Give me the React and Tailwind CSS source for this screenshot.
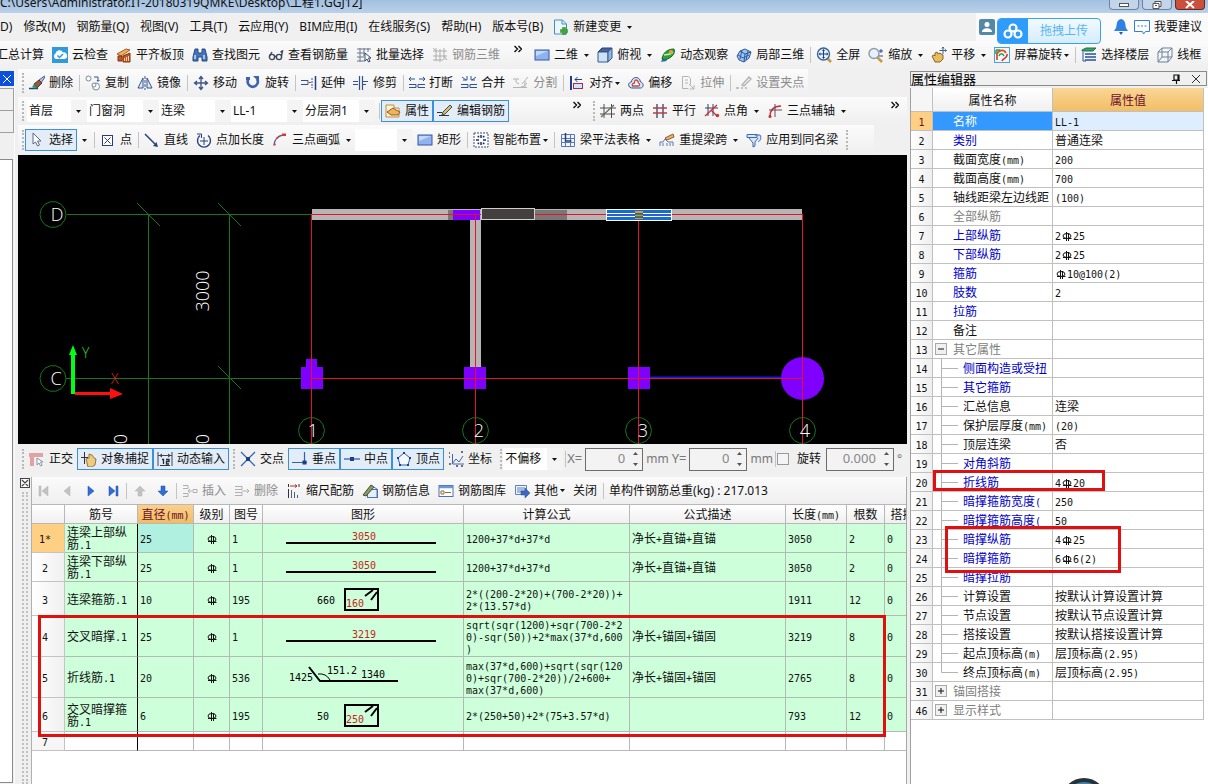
import React from 'react';
import clsx from 'clsx';

const UI = "font-['Noto_Sans','Noto_Sans_CJK_SC',sans-serif]";

// 16x16 toolbar drawings
const icons = {
  cloudCheck: (
    <>
      <rect width="16" height="16" fill="#2d9bdc" />
      <path d="M4 12a3 3 0 0 1-.5-5.500A4 4 0 0 1 11 5.500a3.300 3.300 0 0 1 1.500 6.500z" fill="#fff" />
      <path d="M5.500 8.500l2 2 3.500-3.500" fill="none" stroke="#2d9bdc" strokeWidth="1.500" />
    </>
  ),
  slab: (
    <>
      <path d="M1 7l9-5 4 1-9 6z" fill="#f0b45a" stroke="#a65a20" />
      <path d="M2 14V9h4v5zM7 15V9l7-3v9z" fill="#c8542a" stroke="#7c3418" />
      <path d="M8.500 14v-3M10.500 14v-4M12.500 14v-5" stroke="#ffd98c" />
    </>
  ),
  find: (
    <>
      <path d="M3 2h3v4h4V2h3l2 8v4h-5v-4H6v4H1v-4z" fill="#4674b8" stroke="#274a86" />
      <path d="M3 8v4M12 8v4" stroke="#c5dcf6" strokeWidth="1.500" />
    </>
  ),
  glasses: (
    <g fill="none" stroke="#3c4858" strokeWidth="1.400">
      <circle cx="4" cy="10" r="2.600" />
      <circle cx="11" cy="10" r="2.600" />
      <path d="M6.500 9.500h2M13.500 9l1-5-2 1M1.500 9L4 5" />
    </g>
  ),
  batch: (
    <>
      <path d="M1 2h14M1 6h8M1 10h7M1 14h8M4 1v14M8 1v8M12 1v4" stroke="#6a7890" />
      <path d="M9 6v8l2-2 1.500 3 1.500-.700L12.500 11H15z" fill="#fff" stroke="#34466a" />
    </>
  ),
  grid3d: <path d="M1 4h14M1 9h14M1 13h10M4 1v13M8 2v13M12 1v12M1 1l3 3M12 9l3 4" stroke="#adadad" fill="none" />,
  rect: (
    <>
      <rect x="1" y="3" width="14" height="10" fill="#8fb3ee" stroke="#3558a5" />
      <path d="M2 4h12L2 9z" fill="#c2d7fa" />
    </>
  ),
  topView: (
    <>
      <path d="M1 5l4-4h10l-4 4z" fill="#49659c" stroke="#26406e" />
      <path d="M1 5h10v10H1z" fill="#cfe3f6" stroke="#36588f" />
      <path d="M11 5l4-4v10l-4 4z" fill="#8db8e0" stroke="#36588f" />
    </>
  ),
  orbit: (
    <>
      <path d="M1 15l2-5 4 4z" fill="#3a6cc0" />
      <path d="M2 12c1-6 5-10 12-10 2 5-3 9-9 11z" fill="#2f9e3c" stroke="#14692b" />
      <path d="M4 8c4-1 7 0 9-3" stroke="#bff0a5" fill="none" strokeWidth="1.500" />
      <circle cx="11" cy="5" r="2" fill="#e8a03a" />
    </>
  ),
  partial3d: (
    <g fill="#9fc3ee" stroke="#2e5a9e">
      <path d="M1 9l3-5 5-2 6 3-2 6-5 4-5-2z" />
      <path d="M4 4l5 3 6-2M9 7l-1 8M2 8l5 3 6-3M6 3l-2 9M12 4l-2 9" fill="none" />
    </g>
  ),
  full: (
    <>
      <path d="M11 11l4 4" stroke="#c79a3d" strokeWidth="2.500" />
      <circle cx="7.500" cy="7" r="6" fill="#e3f0fd" stroke="#3b6294" strokeWidth="1.400" />
      <path d="M7.500 3v8M3.500 7h8M6.500 4l1-1.500L8.500 4M6.500 10l1 1.500 1-1.500M4.500 6L3 7l1.500 1M10.500 6L12 7l-1.500 1" fill="none" stroke="#1f3f83" />
    </>
  ),
  zoom: (
    <>
      <path d="M9 10l5 5" stroke="#c79a3d" strokeWidth="2.500" />
      <circle cx="6" cy="6.500" r="5" fill="#e6f1fb" stroke="#8c9cae" strokeWidth="1.400" />
      <path d="M13 2v4M11 4h4M11 9h4" stroke="#2b4c8a" />
    </>
  ),
  pan: (
    <>
      <path d="M1 9l2-1 1 1V6l2-1 1 2 2-1 1 1 2 1v4l-3 3H4z" fill="#e7bd62" stroke="#8a6422" />
      <path d="M12 0v7M8.500 3.500h7M11 1.500L12 0l1 1.500M14 2.500l1.500 1-1.500 1" stroke="#44608f" fill="none" />
    </>
  ),
  screenRotate: (
    <>
      <rect x=".5" y=".5" width="15" height="15" fill="#f2f7fb" stroke="#4aa0d8" />
      <path d="M3 13V7c1-4 7-5 9-1" fill="none" stroke="#e0502b" strokeWidth="1.800" />
      <path d="M2 3h4M2 3v4" stroke="#2b9f48" strokeWidth="1.500" />
      <path d="M13 7c1 4-4 4-5 7" fill="none" stroke="#d0383a" strokeWidth="1.600" />
      <path d="M5 9c1-3 4-3 5 0" fill="none" stroke="#2b9f48" strokeWidth="1.500" />
    </>
  ),
  floors: (
    <>
      <path d="M1 3l4-2h10l-3 3H1z" fill="#38a36a" stroke="#226d48" />
      <path d="M4 7h11M4 10h11M4 13h11" stroke="#24509b" strokeWidth="1.600" />
      <path d="M2 5v9h3" fill="none" stroke="#24509b" />
    </>
  ),
  wire: <path d="M1 5l4-4h10v9l-4 5H1zM1 5h10v10M11 5l4-4M5 1v9h10M5 10l-4 5" fill="none" stroke="#6d819b" />,
  erase: (
    <>
      <path d="M0 13.500h9" stroke="#223f85" strokeWidth="1.500" />
      <path d="M15.500 1L10 5l2 3 4-6z" fill="#b9c8e6" stroke="#435a90" />
      <path d="M10 5L5 9l3 4 5-5z" fill="#8a5a4a" stroke="#5d3020" />
      <path d="M5 9l-2 3 3 1.500 2-.5z" fill="#2f9d5b" />
    </>
  ),
  copy: (
    <g fill="#fff" stroke="#7886a0">
      <circle cx="3.500" cy="3.500" r="2.500" />
      <circle cx="11" cy="11.500" r="3.500" />
      <path d="M9 2h4v4M12 5l1 1.500L14.500 5" stroke="#34528f" fill="none" />
      <circle cx="9" cy="10" r="2" />
    </g>
  ),
  mirror: (
    <>
      <path d="M6 3v10H1zM10 3v10h5z" fill="#dfeaf8" stroke="#34528f" />
      <path d="M8 1v14" stroke="#34528f" strokeDasharray="3 1" />
    </>
  ),
  move: <path d="M8 2v12M2 8h12M6 4l2-2.500L10 4M6 12l2 2.500 2-2.500M4 6L1.500 8 4 10M12 6l2.500 2-2.500 2" stroke="#3c5488" fill="none" strokeWidth="1.300" />,
  rotate: (
    <>
      <path d="M3.500 4a5 5 0 1 0 8.500 0" fill="none" stroke="#3f64ae" strokeWidth="2.600" />
      <path d="M8 1h6v6z" fill="#3f64ae" />
      <path d="M1 2h4v3H1z" fill="#3f64ae" />
    </>
  ),
  extend: (
    <>
      <path d="M0 5.500h7v4H0" fill="none" stroke="#34528f" />
      <path d="M8 7.500h2" stroke="#c33" />
      <path d="M11 3v10" stroke="#34528f" strokeDasharray="2 1" />
      <path d="M14.500 1v14" stroke="#223f85" strokeWidth="1.500" />
    </>
  ),
  trim: <path d="M0 6.500h5M0 9.500h5M10 6.500h5M10 9.500h3M6.500 1v14M9.500 1v14" stroke="#34528f" strokeWidth="1.200" />,
  breakIt: <path d="M6 4H0M2 2L0 4l2 2M10 4h6M14 2l2 2-2 2M0 9.500h7v3H0M16 9.500H9v3h7" fill="none" stroke="#2f5297" />,
  merge: <path d="M1 2l4 3M2 5h4V1M15 2l-4 3M14 5h-4V1M0 9.500h7v3H0M16 9.500H9v3h7" fill="none" stroke="#2f5297" />,
  split: <path d="M0 4h6M0 12.500h14M3 4v3l3 2M9 9l6-7M8 11l2 1 4-4M12 6v6" fill="none" stroke="#b4b4b4" />,
  align: (
    <>
      <path d="M2 1v14" stroke="#223f85" strokeWidth="2" />
      <rect x="4.500" y="8.500" width="9" height="5" fill="#d4e4f8" stroke="#a03048" />
      <path d="M13 4.500H6M8.500 2L6 4.500 8.500 7" stroke="#223f85" fill="none" />
    </>
  ),
  offset: (
    <>
      <path d="M1.500 12c-2-3 0-5 2-5 0-5 8-7 9 0 4 1 3 6 0 6h-9z" fill="#dfe9f6" stroke="#34528f" />
      <path d="M4.500 11c-1-2 1-3 2-3 0-4 3-4 4 0 2 1 1 3 0 3z" fill="#fff" stroke="#c74a4a" strokeWidth="1.300" />
    </>
  ),
  stretch: <path d="M2.500 1.500h6l2 2v6M2.500 1.500v12h6M5 5h3M5 8h3M9 9l5 5M14 10v4h-4" fill="none" stroke="#b4b4b4" />,
  grip: <path d="M0 13h3M5 13h2M9 13h2M6 10l7-8 2 2-7 7z" fill="none" stroke="#b0b0b0" strokeWidth="1.300" />,
  props: (
    <>
      <path d="M1 2h8v3h5v9H1z" fill="#fff4d8" stroke="#c08a3a" />
      <path d="M2 9l6-4 3 2 4 2-2 3H6z" fill="#efb35b" stroke="#935d1a" />
    </>
  ),
  editRebar: (
    <>
      <path d="M0 9.500h5M2 12.500h10" stroke="#333" />
      <path d="M6 9l7-7 2 2-7 7-3 1z" fill="#d5c27a" stroke="#4a4a3a" />
    </>
  ),
  twoPoint: (
    <>
      <path d="M4 1v14M11.500 1v14M0 5h16M0 11h15" stroke="#4e4e4e" />
      <path d="M1 14L14 2" stroke="#6a6a5a" strokeWidth="1.300" />
    </>
  ),
  parallel: (
    <>
      <path d="M5 1v14M11 1v14" stroke="#34406a" strokeWidth="1.300" />
      <path d="M1 5h14M1 10h14" stroke="#b84040" strokeWidth="1.300" />
    </>
  ),
  pointAngle: (
    <>
      <path d="M4 1v12M9 1v12M1 5h13" stroke="#34406a" />
      <path d="M1 13L13 2M7 7l6 6" stroke="#c83232" strokeWidth="1.300" />
      <circle cx="13.500" cy="12.500" r="1.700" fill="#c83232" />
    </>
  ),
  threeAxis: (
    <>
      <path d="M3 14C3 7 6 3 14 3" fill="none" stroke="#c83232" strokeWidth="1.500" />
      <path d="M8 1v13M2 7h13" stroke="#6b4466" />
      <circle cx="3" cy="13.500" r="1.500" fill="#c83232" />
    </>
  ),
  cursor: <path d="M4 1v11l2.500-2L8.500 14l2-1-2-4H12z" fill="#fff" stroke="#5a6a86" />,
  point: (
    <>
      <rect x="2.500" y="3.500" width="10" height="10" fill="#fff" stroke="#2b3c7c" />
      <path d="M4.500 5.500l6 6M10.500 5.500l-6 6" stroke="#2b3c7c" />
    </>
  ),
  line: (
    <>
      <path d="M1 2l10 10" stroke="#27407c" strokeWidth="1.500" />
      <path d="M14 15l-5-1 3.500-4z" fill="#27407c" />
    </>
  ),
  pointLen: (
    <>
      <path d="M4 3.500a6.500 6.500 0 1 0 8 0" fill="none" stroke="#27407c" strokeWidth="1.400" />
      <path d="M8 5v8M4 9h8M1 2h4.500v4" fill="none" stroke="#27407c" />
    </>
  ),
  arc: (
    <>
      <path d="M2 13C2 8 6 3 13 3" fill="none" stroke="#6d5a86" strokeWidth="1.300" />
      <path d="M1 14l2-3 1 2zM10 1.500h4v2.500h-4zM4 6l3-2-1 3z" fill="#d03c3c" />
    </>
  ),
  smart: (
    <>
      <rect x="1" y="1" width="14" height="14" fill="#fff" stroke="#38506e" strokeDasharray="2 1" />
      <path d="M8 3v3M8 10v3M3 8h3M10 8h3M4.500 4.500h1v1M11.500 4.500h-1v1M4.500 11.500h1v-1M11.500 11.500h-1v-1" stroke="#1c2f66" strokeWidth="1.500" fill="none" />
    </>
  ),
  beamTable: (
    <>
      <path d="M1.500 2.500h13v12h-13zM1 6.500h14M1 10.500h14M5.500 2v12M10.500 2v12" fill="#eef5fd" stroke="#5b78b4" />
      <path d="M5.500 1v8h6" stroke="#27407c" strokeWidth="1.500" fill="none" />
    </>
  ),
  span: (
    <>
      <path d="M1 14v-4h3l2-3 3 3h5v4M4 14v-3M8 14v-3M11 14v-3" fill="none" stroke="#5b78b4" />
      <path d="M6 6l8-4 1 3-7 3z" fill="#e8b56a" stroke="#905c24" />
    </>
  ),
  applyTo: <path d="M1 2.500h10v3H1zM3 6l4 5v4l2-1v-4l3-4M9 3h5c2 3 0 6-2 7" fill="#d8e6f8" stroke="#3f68b0" />,
  ortho: (
    <>
      <path d="M0 2h14v4H5v9H1V6H0z" fill="#e2a2a2" />
      <path d="M8 7v7l2-2 1.500 3 1.500-.700L11.500 11H14z" fill="#fff" stroke="#8a96a8" />
    </>
  ),
  snap: (
    <>
      <path d="M5 8l3-1V3l3 1 2 3 2 1-1 6-3 2H7z" fill="#eccb87" stroke="#9c7430" />
      <path d="M3.500 1v12M0 6.500h7" stroke="#333" />
    </>
  ),
  dynamic: (
    <>
      <path d="M1 1v14M15 1v14M1 4.500h14" stroke="#445" fill="none" />
      <path d="M2 4.500l3-2v4zM14 4.500l-3-2v4z" fill="#445" />
      <path d="M3 14.500h10" stroke="#2f3b4c" />
      <path d="M5 8.500h1.500V13M9 8.500h3v2H9.500V13H12" stroke="#1f2a3a" strokeWidth="1.300" fill="none" />
    </>
  ),
  cross: (
    <>
      <path d="M1 1l14 14M15 1L1 15" stroke="#2f62b4" strokeWidth="1.200" />
      <rect x="6" y="6" width="4" height="4" fill="#1f3f83" />
    </>
  ),
  perp: (
    <>
      <path d="M0 11.500h15M12.500 1v10" stroke="#2f62b4" strokeWidth="1.200" />
      <rect x="10.500" y="9.500" width="4" height="4" fill="#1f3f83" />
    </>
  ),
  mid: (
    <>
      <path d="M0 8h16" stroke="#2f62b4" strokeWidth="1.300" />
      <rect x="6" y="6" width="4" height="4" fill="#1f3f83" />
    </>
  ),
  vertex: (
    <>
      <path d="M8 2l6 5-2 7H4L2 7z" fill="#f4f9ff" stroke="#2f62b4" />
      <path d="M7 1h2v2H7zM13 6h2v2h-2zM11 13h2v2h-2zM3 13h2v2H3zM1 6h2v2H1z" fill="#1f3f83" />
    </>
  ),
  coord: (
    <>
      <path d="M4.500 3v10H16M4 13l4-5 3 3 4-6" stroke="#3f68b0" fill="none" />
      <path d="M1 2h1M1 6h1M1 13h2M13 1h2M8 15h2M13 15h2" stroke="#3c4858" strokeWidth="1.500" />
    </>
  ),
  insert: <path d="M1 2.500h5v3H1M1 10.500h5v3H1M6 8h4M8 6L6 8l2 2M11 6.500h4v3h-4z" fill="none" stroke="#b0b0b0" />,
  remove: <path d="M1 3.500h7v3H1M1 9.500h7v3H1M8 8h7M13 6l2 2-2 2" fill="none" stroke="#b0b0b0" />,
  scale: (
    <>
      <path d="M2.500 1v3M2.500 6v9M13 1v3" stroke="#333" />
      <path d="M4 3h7M9 1.500L11 3 9 4.500" stroke="#b03030" fill="none" />
      <path d="M5.500 7v8M8.500 9v6M11.500 12v3" stroke="#51607c" />
    </>
  ),
  rebarInfo: (
    <>
      <rect x="5.500" y="6.500" width="10" height="8" fill="#e4effb" stroke="#4b73b6" />
      <path d="M1 12L9 2l3 2-8 9z" fill="#8d9f5e" stroke="#3e4a2b" />
      <path d="M10 3l5 3v8" stroke="#4b73b6" fill="none" />
    </>
  ),
  library: (
    <>
      <rect x="1" y="2.500" width="14" height="11" fill="#fff" stroke="#4b73b6" />
      <path d="M1 4h14" stroke="#6b97da" strokeWidth="2.500" />
      <path d="M3 8h3v3H3zM7 9.500h6" stroke="#9a6a2c" fill="none" />
    </>
  ),
  other: (
    <>
      <path d="M1.500 2.500h11v9h-11zM3 5h8M3 7h8M3 9h5" fill="#eef5fd" stroke="#5f83c2" />
      <path d="M7 8h4V5l5 5-5 5v-3H7z" fill="#3c68c4" stroke="#24468f" strokeWidth=".5" />
    </>
  ),
  newDoc: (
    <>
      <path d="M1.500 1h8l4 4v10h-12z" fill="#edf6fd" stroke="#3a93c6" />
      <path d="M9 1v4h4" fill="none" stroke="#3a93c6" />
      <path d="M9.500 8.500h3v2h2v3h-2v2h-3v-2h-2v-3h2z" fill="#3fa535" stroke="#2c8425" strokeWidth=".5" />
    </>
  ),
};

const Icon = ({ name }) => (
  <svg className="size-4 shrink-0" viewBox="0 0 16 16" aria-hidden="true">
    {icons[name]}
  </svg>
);

const Caret = ({ className }) => (
  <svg className={clsx('h-[3px] w-[5px] shrink-0', className)} viewBox="0 0 5 3" aria-hidden="true">
    <path d="M0 0h5L2.500 3z" fill="#111" />
  </svg>
);

const Tool = ({ icon, active, muted, caret, children }) => (
  <button
    type="button"
    disabled={muted}
    className={clsx(
      'flex h-[22px] shrink-0 items-center gap-1 whitespace-nowrap border px-[3px]',
      active ? 'border-[#3c8fdc] bg-[#e3edf8]' : 'border-transparent',
      muted ? 'text-[#8c8c8c]' : 'text-[#111]'
    )}
  >
    {icon && <Icon name={icon} />}
    <span>{children}</span>
    {caret === 'tight' && <Caret className="-ml-0.5" />}
    {caret === 'split' && <Caret className="ml-0.5" />}
  </button>
);

const Sep = () => <span className="mr-px ml-0.5 h-4 w-px shrink-0 bg-[#c4c4c4]" />;

const Grip = () => <span className="mr-px ml-1 h-5 w-0 shrink-0 border-l-2 border-dotted border-[#b8b8b8]" />;

const More = () => (
  <button type="button" aria-label="更多" className="flex h-5 w-6 shrink-0 items-start justify-center">
    <svg className="h-2 w-2" viewBox="0 0 8 8" aria-hidden="true">
      <path d="M.5 1l3 3-3 3M4.500 1l3 3-3 3" fill="none" stroke="#111" strokeWidth="1.400" />
    </svg>
  </button>
);

const Bar = ({ className, children }) => (
  <div className={clsx('flex items-center bg-linear-to-b from-[#fbfbfb] to-[#efefef]', className)}>{children}</div>
);

const Combo = ({ label, value, width }) => (
  <span className={clsx('relative flex h-[22px] shrink-0 items-center bg-[#f4f4f4]', width)}>
    <select aria-label={label} defaultValue={value} className="mr-4 h-full w-full appearance-none bg-white px-0.5 text-[#111]">
      <option>{value}</option>
    </select>
    <Caret className="pointer-events-none absolute right-1.5" />
  </span>
);

const NumberBox = ({ label, value, width }) => (
  <span className={clsx('flex h-[23px] shrink-0 items-center border border-[#6d6d6d] bg-[#f3f3f3] pr-1', width)}>
    <input aria-label={label} defaultValue={value} disabled className="w-full min-w-0 pr-2 text-right text-[13px] text-[#888]" />
    <svg className="h-4 w-[5px] shrink-0" viewBox="0 0 5 16" aria-hidden="true">
      <path d="M0 4l2.500-3L5 4zM0 12l2.500 3L5 12z" fill="#555" />
    </svg>
  </span>
);

const Steel = () => (
  <svg className="inline-block h-[9px] w-3 align-[-1px]" viewBox="0 0 12 9" role="img" aria-label="HRB400">
    <ellipse cx="6" cy="4" rx="4" ry="2.500" fill="none" stroke="#111" />
    <path d="M5.500 0v9M7.500 1v8M2 6.500h8.500" stroke="#111" fill="none" />
  </svg>
);

// Latin runs are set in a half-width face next to full-width Chinese
const Mixed = ({ text }) =>
  text.split(/([\x20-\x7e]+|Φ)/).map((part, i) => {
    if (part === 'Φ') return <Steel key={i} />;
    if (i % 2) {
      return (
        <span key={i} className="font-['DejaVu_Sans_Mono','Liberation_Mono',monospace] text-[10px] leading-2">
          {part}
        </span>
      );
    }
    return part;
  });

const ring = (cx, cy) =>
  Array.from({ length: 14 }, (_, i) => {
    const a = (i * Math.PI) / 7;
    return `${(cx + 13 * Math.cos(a)).toFixed(1)},${(cy + 13 * Math.sin(a)).toFixed(1)}`;
  }).join(' ');

function Drawing() {
  return (
    <svg className="block h-[289px] w-full bg-black font-['Open_Sans','Noto_Sans',sans-serif] font-light" viewBox="0 0 889 289" preserveAspectRatio="xMinYMin slice">
      <g stroke="#15761f" fill="none">
        <path d="M49 59.500h245M48 223.500h246M130.500 59v230M211.500 59v230" />
        <path d="M119 48l23 23M200 48l23 23M200 211l23 23" />
        {[[35, 59.5], [35, 223.5], [293.5, 275.5], [457.5, 275.5], [620.5, 275.5], [784.5, 275.5]].map(([x, y]) => (
          <polygon key={`${x}-${y}`} points={ring(x, y)} />
        ))}
      </g>
      <g fill="#b8b4b4">
        <rect x="294" y="54" width="490" height="11" />
        <rect x="452" y="65" width="11" height="148" />
      </g>
      <rect x="430" y="55" width="5" height="10" fill="#7a7777" />
      <rect x="435" y="55" width="27" height="10" fill="#7f00ff" />
      <rect x="517" y="55" width="32" height="10" fill="#7a7777" />
      <g fill="#7f00ff">
        <path d="M288 204h11v8h6v22h-22v-22h5z" />
        <rect x="446" y="212" width="22" height="22" />
        <rect x="610" y="212" width="22" height="22" />
        <circle cx="784.500" cy="223.500" r="21.500" />
      </g>
      <path d="M632 222.500h131" stroke="#1a1ae0" strokeWidth="2" />
      <path d="M294 59.500h490M294 223.500h490M293.500 59v230M457.500 59v230M620.500 59v230M784.500 59v230" stroke="#e0142c" fill="none" />
      <rect x="463.500" y="53.500" width="53" height="11" fill="#454040" stroke="#cfcfcf" />
      <rect x="588.500" y="54.500" width="65" height="11" fill="#0f6fd4" stroke="#fff" />
      <path d="M589 58.500h64M589 61.500h64" stroke="#fff" />
      <path d="M589 60h64" stroke="#5a48b8" />
      <rect x="617" y="56" width="8" height="8" fill="#c89a6a" />
      <path d="M617 59h8M617 62h8" stroke="#111" />
      <path d="M618 60.500h6" stroke="#3fd070" strokeWidth="1.500" />
      <g fill="#fff" fontSize="18" textAnchor="middle">
        <text x="39" y="66">D</text>
        <text x="38" y="230">C</text>
        <text x="295" y="282">1</text>
        <text x="461" y="282">2</text>
        <text x="625" y="282">3</text>
        <text x="787" y="282">4</text>
        <text transform="translate(191 136) rotate(-90)">3000</text>
        <text transform="translate(109 284) rotate(-90)">0</text>
        <text transform="translate(191 284) rotate(-90)">0</text>
      </g>
      <path d="M53 239v-39h-2l4-10 4 10h-2v39z" fill="#00ff12" />
      <path d="M57 237h35v-4l13 6-13 5v-4H57z" fill="#ff1010" />
      <text x="64" y="203" fontSize="14" fill="#22dd30">Y</text>
      <text x="93" y="229" fontSize="14" fill="#e02828">X</text>
    </svg>
  );
}

const barShape = (n) => (
  <svg className="block h-7 w-full" viewBox="0 0 200 28" aria-hidden="true">
    <path d="M23 19h150" stroke="#000" strokeWidth="2" />
    <text x="101" y="16" textAnchor="middle" fontSize="10" fill="#c81e1e">{n}</text>
  </svg>
);

const hoopShape = (side, n) => (
  <svg className="block h-7 w-full" viewBox="0 0 200 28" aria-hidden="true">
    <rect x="82" y="4" width="33" height="21" fill="none" stroke="#000" strokeWidth="2" />
    <path d="M102 11l8-6M108 15l6-8" stroke="#000" strokeWidth="2" />
    <text x="54" y="19" fontSize="10">{side}</text>
    <text x="83" y="22" fontSize="10" fill="#c81e1e">{n}</text>
  </svg>
);

const foldShape = (
  <svg className="block h-9 w-full" viewBox="0 0 200 36" aria-hidden="true">
    <path d="M46 8l11 14h78" fill="none" stroke="#000" strokeWidth="2" />
    <path d="M55 15q8-1 12 6" fill="none" stroke="#000" />
    <text x="26" y="22" fontSize="10">1425</text>
    <text x="64" y="15" fontSize="10">151.2</text>
    <text x="98" y="19" fontSize="10">1340</text>
  </svg>
);

const rebars = [
  { no: '1*', h: 'h-[29px]', name: '连梁上部纵\n筋.1', d: '25', fig: '1', shape: barShape('3050'), formula: '1200+37*d+37*d', desc: '净长+直锚+直锚', len: '3050', n: '2' },
  { no: '2', h: 'h-[29px]', name: '连梁下部纵\n筋.1', d: '25', fig: '1', shape: barShape('3050'), formula: '1200+37*d+37*d', desc: '净长+直锚+直锚', len: '3050', n: '2' },
  { no: '3', h: 'h-[34px]', name: '连梁箍筋.1', d: '10', fig: '195', shape: hoopShape('660', '160'), formula: '2*((200-2*20)+(700-2*20))+\n2*(13.57*d)', desc: '', len: '1911', n: '12' },
  { no: '4', h: 'h-[41px]', name: '交叉暗撑.1', d: '25', fig: '1', shape: barShape('3219'), formula: 'sqrt(sqr(1200)+sqr(700-2*2\n0)-sqr(50))+2*max(37*d,600\n)', desc: '净长+锚固+锚固', len: '3219', n: '8' },
  { no: '5', h: 'h-[41px]', name: '折线筋.1', d: '20', fig: '536', shape: foldShape, formula: 'max(37*d,600)+sqrt(sqr(120\n0)+sqr(700-2*20))/2+600+\nmax(37*d,600)', desc: '净长+锚固+锚固', len: '2765', n: '8' },
  { no: '6', h: 'h-[34px]', name: '交叉暗撑箍\n筋.1', d: '6', fig: '195', shape: hoopShape('50', '250'), formula: '2*(250+50)+2*(75+3.57*d)', desc: '', len: '793', n: '12' },
];

const rebarHeads = ['', '筋号', '直径(mm)', '级别', '图号', '图形', '计算公式', '公式描述', '长度(mm)', '根数', '搭接'];
const rebarCols = ['w-[33px]', 'w-[73px]', 'w-14', 'w-9', 'w-[33px]', 'w-[201px]', 'w-[166px]', 'w-[156px]', 'w-[61px]', 'w-[38px]', 'w-9'];

function RebarTable() {
  const cell = 'border-r border-b border-[#b4b9b4] px-0.5 py-0 whitespace-pre';
  return (
    <div className="relative overflow-hidden border-t border-[#b8b8b8]">
      <table className="w-[889px] table-fixed border-separate border-spacing-0 font-['Noto_Sans_CJK_SC',sans-serif] text-xs leading-3 text-[#111]">
        <colgroup>
          {rebarCols.map((w, i) => (
            <col key={i} className={w} />
          ))}
        </colgroup>
        <thead>
          <tr className="h-[19px]">
            {rebarHeads.map((head, i) => (
              <th
                key={i}
                scope="col"
                className={clsx(
                  'border-r border-b border-[#b8b8b8] p-0 font-normal whitespace-nowrap',
                  i === 2 ? 'bg-linear-to-b from-[#fbd08a] to-[#f0bd63] text-[#6b0f2a]' : 'bg-linear-to-b from-white to-[#f0f0f0]'
                )}
              >
                <Mixed text={head} />
              </th>
            ))}
          </tr>
        </thead>
        <tbody>
          {rebars.map((r, i) => (
            <tr key={r.no} className={clsx(r.h, 'bg-[#ccffda]')}>
              <th
                scope="row"
                className={clsx(
                  'border-r border-b border-[#c4c4c4] p-0 pr-1.5 font-normal',
                  i === 0 ? 'bg-[#ffd083]' : 'bg-linear-to-r from-white to-[#f0f0f0]'
                )}
              >
                <Mixed text={r.no} />
              </th>
              <td className="border-r border-b border-r-black border-b-[#b4b9b4] px-0.5 py-0 whitespace-pre"><Mixed text={r.name} /></td>
              <td className={clsx(cell, i === 0 && 'bg-[#b0f0e0]')}><Mixed text={r.d} /></td>
              <td className={clsx(cell, 'text-center')}><Steel /></td>
              <td className={cell}><Mixed text={r.fig} /></td>
              <td className="border-r border-b border-[#b4b9b4] p-0 font-['DejaVu_Sans_Mono',monospace]">{r.shape}</td>
              <td className={cell}><Mixed text={r.formula} /></td>
              <td className={cell}><Mixed text={r.desc} /></td>
              <td className={cell}><Mixed text={r.len} /></td>
              <td className={cell}><Mixed text={r.n} /></td>
              <td className={cell}><Mixed text="0" /></td>
            </tr>
          ))}
          <tr className="h-[19px]">
            <th scope="row" className="border-r border-b border-[#c4c4c4] bg-[#f6f6f6] p-0 pr-1.5 font-normal"><Mixed text="7" /></th>
            {rebarCols.slice(1).map((w, i) => (
              <td key={i} className={clsx('border-r border-b p-0', i === 0 ? 'border-r-black border-b-[#b8b8b8]' : 'border-[#b8b8b8]')} />
            ))}
          </tr>
        </tbody>
      </table>
      <div className="pointer-events-none absolute top-[110px] left-1.5 h-[122px] w-[848px] border-3 border-[#de1010]" />
    </div>
  );
}

// tone: b = blue, g = grey, k = black
const properties = [
  ['1', '名称', 'LL-1', 'sel'],
  ['2', '类别', '普通连梁', 'b'],
  ['3', '截面宽度(mm)', '200', 'k'],
  ['4', '截面高度(mm)', '700', 'k'],
  ['5', '轴线距梁左边线距', '(100)', 'k'],
  ['6', '全部纵筋', '', 'g'],
  ['7', '上部纵筋', '2Φ25', 'b'],
  ['8', '下部纵筋', '2Φ25', 'b'],
  ['9', '箍筋', 'Φ10@100(2)', 'b'],
  ['10', '肢数', '2', 'b'],
  ['11', '拉筋', '', 'b'],
  ['12', '备注', '', 'k'],
  ['13', '其它属性', '', 'g', 'minus'],
  ['14', '侧面构造或受扭', '', 'b', 'leaf'],
  ['15', '其它箍筋', '', 'b', 'leaf'],
  ['16', '汇总信息', '连梁', 'k', 'leaf'],
  ['17', '保护层厚度(mm)', '(20)', 'k', 'leaf'],
  ['18', '顶层连梁', '否', 'k', 'leaf'],
  ['19', '对角斜筋', '', 'b', 'leaf'],
  ['20', '折线筋', '4Φ20', 'b', 'leaf'],
  ['21', '暗撑箍筋宽度(', '250', 'b', 'leaf'],
  ['22', '暗撑箍筋高度(', '50', 'b', 'leaf'],
  ['23', '暗撑纵筋', '4Φ25', 'b', 'leaf'],
  ['24', '暗撑箍筋', '6Φ6(2)', 'b', 'leaf'],
  ['25', '暗撑拉筋', '', 'b', 'leaf'],
  ['26', '计算设置', '按默认计算设置计算', 'k', 'leaf'],
  ['27', '节点设置', '按默认节点设置计算', 'k', 'leaf'],
  ['28', '搭接设置', '按默认搭接设置计算', 'k', 'leaf'],
  ['29', '起点顶标高(m)', '层顶标高(2.95)', 'k', 'leaf'],
  ['30', '终点顶标高(m)', '层顶标高(2.95)', 'k', 'last'],
  ['31', '锚固搭接', '', 'g', 'plus'],
  ['46', '显示样式', '', 'g', 'plus'],
];

const tones = { b: 'text-[#0000c8]', g: 'text-[#808080]', k: 'text-[#111]', sel: 'bg-[#3399ff] text-white' };

const TreeMark = ({ kind }) => {
  if (kind === 'minus' || kind === 'plus') {
    return (
      <svg className="h-[18px] w-5 shrink-0" viewBox="0 0 20 18" role="img" aria-label={kind === 'plus' ? '展开' : '收起'}>
        <rect x="2.500" y="3.500" width="11" height="11" fill="#f0f0f0" stroke="#a8a8a8" />
        <path d={kind === 'plus' ? 'M5 9h6M8 6v6' : 'M5 9h6'} stroke="#111" />
      </svg>
    );
  }
  if (kind) {
    return (
      <svg className="h-[18px] w-[30px] shrink-0" viewBox="0 0 30 18" aria-hidden="true">
        <path d={kind === 'last' ? 'M8.500 0v9.500H25' : 'M8.500 0v18M8.500 9.500H25'} stroke="#b4b4b4" fill="none" />
      </svg>
    );
  }
  return <span className="w-5 shrink-0" />;
};

function PropertyPanel() {
  return (
    <aside className="relative flex w-[298px] shrink-0 flex-col overflow-hidden font-['Noto_Sans_CJK_SC',sans-serif] text-xs">
      <div className="mt-0.5 mr-px flex h-[15px] items-center border border-[#8a8a8a] bg-[#f0f0f0]">
        <h2 className="text-[13px] leading-3 text-black">属性编辑器</h2>
        <button type="button" aria-label="固定" className="ml-auto w-5">
          <svg className="size-3" viewBox="0 0 12 12"><path d="M4 2h5v5H4zM2 7.500h8M6.500 7v4M8 2v5" fill="none" stroke="#111" strokeWidth="1.200" /></svg>
        </button>
        <button type="button" aria-label="关闭" className="w-4">
          <svg className="size-3" viewBox="0 0 12 12"><path d="M2 2l8 8M10 2l-8 8" stroke="#333" /></svg>
        </button>
      </div>
      <div className="relative mt-0.5 flex-1 border-l border-[#a0a0a0] bg-white">
        <table className="w-[293px] table-fixed border-separate border-spacing-0 leading-3">
          <colgroup>
            <col className="w-[22px]" />
            <col className="w-[120px]" />
            <col />
          </colgroup>
          <thead>
            <tr className="h-6">
              <th className="border-r border-b border-[#c0c0c0] bg-[#f6f6f6] p-0" />
              <th scope="col" className="border-r border-b border-[#c0c0c0] bg-linear-to-b from-white to-[#f0f0f0] p-0 font-normal">属性名称</th>
              <th scope="col" className="border-r border-b border-[#c0c0c0] bg-linear-to-b from-[#fbd594] to-[#f0bf66] p-0 font-normal text-[#6b0f2a]">属性值</th>
            </tr>
          </thead>
          <tbody>
            {properties.map(([no, name, value, tone, mark]) => (
              <tr key={no} className="h-[19px]">
                <th
                  scope="row"
                  className={clsx(
                    'border-r border-b border-[#c0c0c0] p-0 font-normal',
                    tone === 'sel' ? 'bg-[#ffd083] text-[#6b0f2a]' : 'bg-linear-to-r from-white to-[#efefef] text-[#111]'
                  )}
                >
                  <Mixed text={no} />
                </th>
                <td className={clsx('overflow-hidden border-r border-b border-[#c0c0c0] p-0 whitespace-nowrap', tones[tone])}>
                  <div className="flex h-[18px] items-center">
                    <TreeMark kind={mark} />
                    <span><Mixed text={name} /></span>
                  </div>
                </td>
                <td className={clsx('border-r border-b border-[#c0c0c0] px-0.5 py-0 text-[#111]', tone === 'sel' && 'bg-[#deeeff]')}>
                  <Mixed text={value} />
                </td>
              </tr>
            ))}
          </tbody>
        </table>
        <div className="pointer-events-none absolute top-[382px] left-[22px] h-[21px] w-[172px] border-3 border-[#de1010]" />
        <div className="pointer-events-none absolute top-[438px] left-[34px] h-[47px] w-[176px] border-3 border-[#de1010]" />
        <svg className="absolute -bottom-10 left-[150px] size-[46px]" viewBox="0 0 46 46" aria-hidden="true">
          <circle cx="23" cy="23" r="21" fill="#3c86a8" stroke="#2b3038" strokeWidth="4" />
        </svg>
      </div>
    </aside>
  );
}

const menus = ['D)', '修改(M)', '钢筋量(Q)', '视图(V)', '工具(T)', '云应用(Y)', 'BIM应用(I)', '在线服务(S)', '帮助(H)', '版本号(B)'];

const NavButton = ({ label, d, off }) => (
  <button type="button" aria-label={label} disabled={off} className="flex h-5 w-[23px] shrink-0 items-center justify-center">
    <svg className="size-3" viewBox="0 0 12 12">
      <path d={d} fill={off ? '#c2c2c2' : '#2f6fd6'} stroke={off ? '#b4b4b4' : '#1f4ea8'} strokeWidth=".5" />
    </svg>
  </button>
);

export default function App() {
  return (
    <div className={clsx('flex min-h-screen flex-col overflow-hidden bg-[#f0f0f0] text-xs text-[#111]', UI)}>
      <header>
        <div className="flex h-[13px] items-end justify-between overflow-hidden bg-linear-to-b from-[#a3c0df] to-[#b9d1ea] pr-[3px]">
          <span className="pb-1 leading-3 whitespace-nowrap">C:\Users\Administrator.IT-20180319QMKE\Desktop\工程1.GGJ12]</span>
          <div className="flex gap-[3px] self-start">
            <button type="button" aria-label="最小化" className="flex h-2.5 w-[30px] items-center justify-center rounded-b border border-t-0 border-[#6d84a0] bg-[#c3d5e8]">
              <span className="h-1 w-2.5 border border-[#555] bg-white" />
            </button>
            <button type="button" aria-label="还原" className="flex h-2.5 w-[30px] items-center justify-center rounded-b border border-t-0 border-[#6d84a0] bg-[#c3d5e8]">
              <svg className="h-2 w-2.5" viewBox="0 0 10 8"><path d="M3 0v3M3 .5h6v5H7M1 2.500h6v5H1zM3 4.500h2" fill="#fff" stroke="#555" /></svg>
            </button>
            <button type="button" aria-label="关闭窗口" className="flex h-2.5 w-[30px] items-center justify-center rounded-b border border-t-0 border-[#6b2a20] bg-[#c9503c]">
              <svg className="h-2 w-2.5" viewBox="0 0 10 8"><path d="M1 0l8 7M9 0L1 7" stroke="#fff" strokeWidth="2" /></svg>
            </button>
          </div>
        </div>

        <div className="flex h-7 items-center">
          <nav className="-ml-[5px] flex items-center gap-px">
            {menus.map((m) => (
              <button key={m} type="button" className="px-[5px] whitespace-nowrap">{m}</button>
            ))}
            <Tool icon="newDoc" caret="split">新建变更</Tool>
          </nav>
          <div className="ml-auto flex h-full items-center bg-[#fafafa] pr-1.5 pl-[3px]">
            <button type="button" aria-label="用户">
              <svg className="size-4" viewBox="0 0 16 16">
                <rect width="16" height="16" rx="2" fill="#5488a8" />
                <circle cx="8" cy="5.500" r="2.500" fill="#fff" />
                <path d="M3 13c0-5 10-5 10 0z" fill="#fff" />
              </svg>
            </button>
            <button type="button" className="relative z-10 ml-0.5 flex h-[26px] w-[104px] translate-y-1 items-center overflow-hidden rounded border border-[#3aa0f5] bg-linear-to-b from-[#f2faff] to-[#d4edfe] text-[#5cb4f2]">
              <span className="flex h-full w-[30px] items-center justify-center bg-[#2f9bfa]">
                <svg className="h-4 w-5" viewBox="0 0 20 16" fill="none" stroke="#fff" strokeWidth="2.200">
                  <circle cx="10" cy="5" r="3.500" />
                  <circle cx="5" cy="11" r="3.500" />
                  <circle cx="15" cy="11" r="3.500" />
                </svg>
              </span>
              <span className="flex-1">拖拽上传</span>
            </button>
            <button type="button" aria-label="通知" className="ml-3">
              <svg className="size-4" viewBox="0 0 16 16">
                <path d="M8 0c5 1 4 6 5 9l2 3H1l2-3c1-3 0-8 5-9z" fill="#2f80e4" />
                <path d="M6 13h4l-2 3z" fill="#1f5eb4" />
              </svg>
            </button>
            <button type="button" className="ml-[5px] flex items-center gap-1 whitespace-nowrap">
              <svg className="size-4" viewBox="0 0 16 16">
                <path d="M.5 1.500h15v11h-4l-2 2.500-1-2.500h-8z" fill="#fff" stroke="#2f80d4" />
                <path d="M3.500 7h9" stroke="#2f80d4" strokeDasharray="2 1.500" />
              </svg>
              我要建议
            </button>
          </div>
        </div>

        <div className="flex h-7 items-center overflow-hidden">
          <Bar className="-ml-2 h-full">
            <Tool>汇总计算</Tool>
            <Tool icon="cloudCheck">云检查</Tool>
            <Tool icon="slab">平齐板顶</Tool>
            <Tool icon="find">查找图元</Tool>
            <Tool icon="glasses">查看钢筋量</Tool>
            <Tool icon="batch">批量选择</Tool>
            <Tool icon="grid3d" muted>钢筋三维</Tool>
            <span className="ml-0.5"><More /></span>
          </Bar>
          <Bar className="h-full flex-1">
            <Tool icon="rect" caret="split">二维</Tool>
            <Tool icon="topView" caret="split">俯视</Tool>
            <Tool icon="orbit">动态观察</Tool>
            <Tool icon="partial3d">局部三维</Tool>
            <Sep />
            <Tool icon="full">全屏</Tool>
            <Tool icon="zoom" caret="split">缩放</Tool>
            <Tool icon="pan" caret="split">平移</Tool>
            <Tool icon="screenRotate" caret="tight">屏幕旋转</Tool>
            <Sep />
            <Tool icon="floors">选择楼层</Tool>
            <Tool icon="wire">线框</Tool>
          </Bar>
        </div>
      </header>

      <div className="flex min-h-0 flex-1">
        <div className="flex w-[14px] shrink-0 flex-col">
          <button type="button" aria-label="关闭面板" className="mt-0.5 flex h-[15px] items-center justify-center bg-[#0a50dc]">
            <svg className="size-2.5" viewBox="0 0 10 10"><path d="M1 1l8 8M9 1L1 9" stroke="#fff" /></svg>
          </button>
          <div className="mt-0.5 h-[22px] border-t border-r border-[#a0a0a0]" />
          <div className="h-[23px] border-y border-r border-[#a0a0a0]" />
          <div className="mt-[26px] mr-px mb-px flex-1 border border-l-0 border-[#8a8a8a] bg-white" />
        </div>

        <main className="flex min-w-0 flex-1 flex-col border-l border-[#fafafa] pr-[3px]">
          <div className="flex h-7 items-center pl-[3px]">
            <Bar className="h-full">
              <Grip />
              <Tool icon="erase">删除</Tool>
              <Sep />
              <Tool icon="copy">复制</Tool>
              <Tool icon="mirror">镜像</Tool>
              <Sep />
              <Tool icon="move">移动</Tool>
              <Tool icon="rotate">旋转</Tool>
              <Sep />
              <Tool icon="extend">延伸</Tool>
              <Tool icon="trim">修剪</Tool>
              <Sep />
              <Tool icon="breakIt">打断</Tool>
              <Tool icon="merge">合并</Tool>
              <Tool icon="split" muted>分割</Tool>
              <Sep />
              <Tool icon="align" caret="tight">对齐</Tool>
              <Tool icon="offset">偏移</Tool>
              <Tool icon="stretch" muted>拉伸</Tool>
              <Sep />
              <Tool icon="grip" muted>设置夹点</Tool>
            </Bar>
          </div>

          <div className="flex h-7 items-center pl-[3px]">
            <Bar className="h-full">
              <Grip />
              <div className="flex px-0.5">
                <Combo label="楼层" value="首层" width="w-[60px]" />
                <Combo label="构件类别" value="门窗洞" width="w-[72px]" />
                <Combo label="构件类型" value="连梁" width="w-[72px]" />
                <Combo label="构件" value="LL-1" width="w-[72px]" />
                <Combo label="分层" value="分层洞1" width="w-[72px]" />
              </div>
              <Sep />
              <Tool icon="props" active>属性</Tool>
              <Tool icon="editRebar" active>编辑钢筋</Tool>
              <span className="ml-14"><More /></span>
            </Bar>
            <Bar className="h-full flex-1">
              <Grip />
              <Tool icon="twoPoint">两点</Tool>
              <Tool icon="parallel">平行</Tool>
              <Tool icon="pointAngle" caret="split">点角</Tool>
              <Tool icon="threeAxis" caret="split">三点辅轴</Tool>
              <span className="ml-auto"><More /></span>
            </Bar>
          </div>

          <div className="flex h-[30px] items-center pl-[3px]">
            <Bar className="h-full">
              <Grip />
              <Tool icon="cursor" active>选择</Tool>
              <button type="button" aria-label="选择方式" className="px-[5px] py-2"><Caret /></button>
              <Sep />
              <Tool icon="point">点</Tool>
              <Sep />
              <Tool icon="line">直线</Tool>
              <Tool icon="pointLen">点加长度</Tool>
              <Tool icon="arc" caret="split">三点画弧</Tool>
              <Combo label="画弧参数" value="" width="w-[58px]" />
              <Tool icon="rect">矩形</Tool>
              <Sep />
              <Tool icon="smart" caret="tight">智能布置</Tool>
              <Sep />
              <Tool icon="beamTable" caret="split">梁平法表格</Tool>
              <Tool icon="span" caret="split">重提梁跨</Tool>
              <Tool icon="applyTo">应用到同名梁</Tool>
            </Bar>
            <Bar className="h-full w-8"><Grip /></Bar>
          </div>

          <div className="pl-[3px]">
            <Drawing />
          </div>

          <div className="flex h-[30px] items-center pl-[3px]">
            <Grip />
            <Tool icon="ortho">正交</Tool>
            <Tool icon="snap" active>对象捕捉</Tool>
            <Tool icon="dynamic" active>动态输入</Tool>
            <Grip />
            <Tool icon="cross">交点</Tool>
            <Tool icon="perp" active>垂点</Tool>
            <Tool icon="mid" active>中点</Tool>
            <Tool icon="vertex" active>顶点</Tool>
            <Tool icon="coord">坐标</Tool>
            <Grip />
            <Combo label="偏移方式" value="不偏移" width="w-[60px]" />
            <Sep />
            <div className="flex items-center gap-[3px] text-[#777]">
              <span className="text-[13px]">X=</span>
              <NumberBox label="X 偏移" value="0" width="w-[58px]" />
              <span>mm</span>
              <span className="text-[13px]">Y=</span>
              <NumberBox label="Y 偏移" value="0" width="w-[58px]" />
              <span>mm</span>
            </div>
            <Sep />
            <label className="flex shrink-0 items-center gap-2">
              <input type="checkbox" className="size-3 appearance-none border border-[#9a9a9a] bg-[#f4f4f4]" />
              旋转
            </label>
            <div className="ml-[5px] flex items-center gap-[3px] text-[#777]">
              <NumberBox label="旋转角度" value="0.000" width="w-[68px]" />
              <span>°</span>
            </div>
          </div>

          <section className="mt-[3px] flex flex-1 pl-[3px]">
            <div className="flex w-[14px] shrink-0 flex-col items-center border-r border-[#b0b0b0]">
              <button type="button" aria-label="关闭编辑钢筋" className="mt-px">
                <svg className="size-2.5" viewBox="0 0 10 10"><path d="M.5.5h9v9h-9zM2 2l6 6M8 2L2 8" fill="#fff" stroke="#444" strokeWidth="1.200" /></svg>
              </button>
              <span className="mt-1 flex flex-1 gap-0.5">
                <span className="border-l-2 border-dotted border-[#c0c0c0]" />
                <span className="border-l-2 border-dotted border-[#c0c0c0]" />
              </span>
            </div>
            <div className="flex min-w-0 flex-1 flex-col border-r border-[#a8a8a8]">
              <Bar className="h-[27px]">
                <NavButton label="第一条" off d="M1 1h2v10H1zM10 1v10L4 6z" />
                <NavButton label="上一条" off d="M9 1v10L3 6z" />
                <NavButton label="下一条" d="M4 1v10l6-5z" />
                <NavButton label="最后一条" d="M2 1v10l6-5zM9 1h2v10H9z" />
                <Sep />
                <NavButton label="上移" off d="M6 1l5 5H8v5H4V6H1z" />
                <NavButton label="下移" d="M6 11l5-5H8V1H4v5H1z" />
                <Sep />
                <Tool icon="insert" muted>插入</Tool>
                <Tool icon="remove" muted>删除</Tool>
                <Tool icon="scale">缩尺配筋</Tool>
                <Tool icon="rebarInfo">钢筋信息</Tool>
                <Tool icon="library">钢筋图库</Tool>
                <Tool icon="other" caret="tight">其他</Tool>
                <Tool>关闭</Tool>
                <Sep />
                <span className="pl-1 whitespace-nowrap">单构件钢筋总重(kg) : 217.013</span>
              </Bar>
              <div className="flex-1 bg-white">
                <RebarTable />
              </div>
            </div>
          </section>
        </main>

        <PropertyPanel />
      </div>
    </div>
  );
}
